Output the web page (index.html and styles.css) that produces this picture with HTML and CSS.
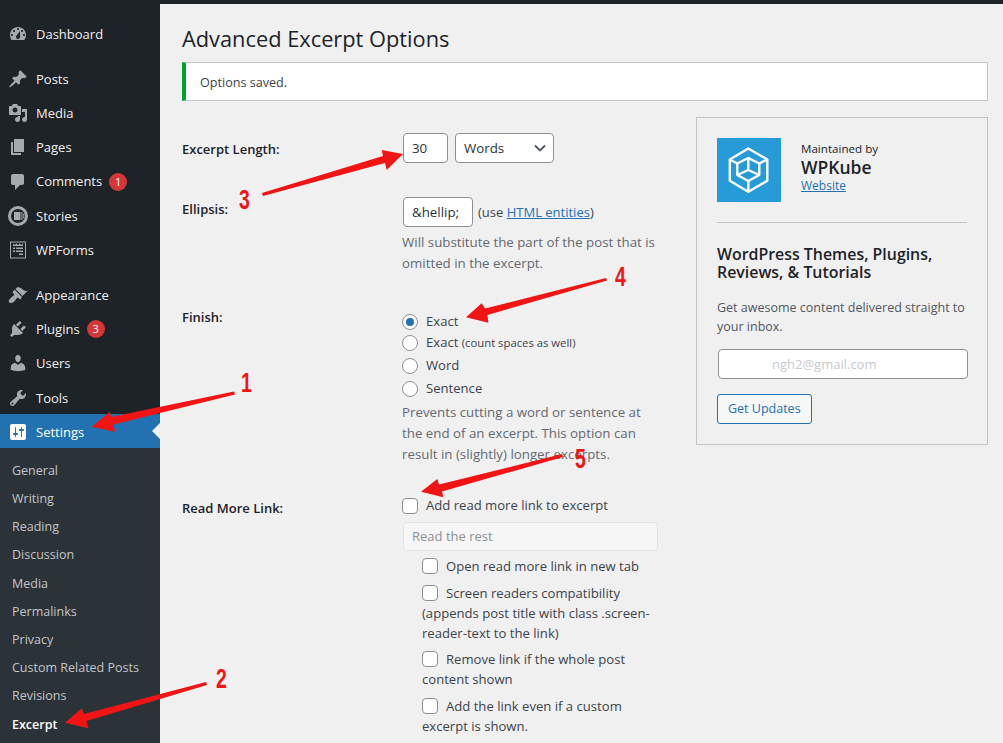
FILE: index.html
```html
<!DOCTYPE html>
<html lang="en">
<head>
<meta charset="utf-8">
<title>Advanced Excerpt Options</title>
<link rel="stylesheet" href="styles.css">
</head>
<body>
<div class="topstrip"></div>
<div class="shell">
<nav class="side">
  <ul class="menu">
    <li class="item dash"><svg class="ic" viewBox="0 0 20 20"><path fill-rule="evenodd" d="M3.76 16h12.48c1.1-1.37 1.76-3.11 1.76-5 0-4.42-3.58-8-8-8s-8 3.58-8 8c0 1.89.66 3.63 1.76 5zM10 4c.55 0 1 .45 1 1s-.45 1-1 1-1-.45-1-1 .45-1 1-1zM6 6c.55 0 1 .45 1 1s-.45 1-1 1-1-.45-1-1 .45-1 1-1zm8 0c.55 0 1 .45 1 1s-.45 1-1 1-1-.45-1-1 .45-1 1-1zm-5.37 5.55L12 7v6c0 1.1-.9 2-2 2s-2-.9-2-2c0-.57.24-1.08.63-1.45zM4 10c.55 0 1 .45 1 1s-.45 1-1 1-1-.45-1-1 .45-1 1-1zm12 0c.55 0 1 .45 1 1s-.45 1-1 1-1-.45-1-1 .45-1 1-1z"/></svg><span>Dashboard</span></li>
    <li class="item"><svg class="ic" viewBox="0 0 20 20"><path d="M10.44 3.02l1.82-1.82 6.36 6.35-1.83 1.82c-1.05-.68-2.48-.57-3.41.36l-.75.75c-.92.93-1.04 2.35-.35 3.41l-1.83 1.82-2.41-2.41-2.8 2.79c-.42.42-3.38 2.71-3.8 2.29s1.86-3.39 2.28-3.81l2.79-2.79L4.1 9.36l1.83-1.82c1.05.69 2.48.57 3.4-.36l.75-.75c.93-.92 1.05-2.35.36-3.41z"/></svg><span>Posts</span></li>
    <li class="item"><svg class="ic" viewBox="0 0 20 20"><path fill-rule="evenodd" d="M13 11V4c0-.55-.45-1-1-1h-1.67L9 1H5L3.67 3H2c-.55 0-1 .45-1 1v7c0 .55.45 1 1 1h10c.55 0 1-.45 1-1zM7 4.500c1.38 0 2.500 1.120 2.500 2.500S8.380 9.500 7 9.500 4.500 8.380 4.500 7 5.620 4.500 7 4.500zM14 6h5v10.500c0 1.380-1.120 2.500-2.500 2.500S14 17.880 14 16.500s1.120-2.500 2.500-2.500c.17 0 .34.02.5.05V9h-3V6zm-4 8.050V13h2v3.500c0 1.380-1.120 2.500-2.500 2.500S7 17.880 7 16.500 8.120 14 9.500 14c.17 0 .34.02.5.05z"/></svg><span>Media</span></li>
    <li class="item"><svg class="ic" viewBox="0 0 20 20"><path d="M6 15V2h10v13H6zm-1 1h8v2H3V5h2v11z"/></svg><span>Pages</span></li>
    <li class="item"><svg class="ic" viewBox="0 0 20 20"><path d="M5 2h9c1.100 0 2 .9 2 2v7c0 1.100-.9 2-2 2h-2l-5 5v-5H5c-1.100 0-2-.9-2-2V4c0-1.100.9-2 2-2z"/></svg><span>Comments</span><b class="badge">1</b></li>
    <li class="item"><svg class="ic" viewBox="0 0 20 20"><path fill-rule="evenodd" d="M10 0a10 10 0 1 1 0 20 10 10 0 0 1 0-20zM10 3a7 7 0 1 0 0 14 7 7 0 0 0 0-14zM6 6h6.500v8H6zM13.500 6h1v8h-1zM15.300 7.500h.9v5h-.9z"/></svg><span>Stories</span></li>
    <li class="item"><svg class="ic" viewBox="0 0 20 20"><path fill-rule="evenodd" d="M2 1.500h16v17H2zM3 2.500v15h14v-15zM5 3.500l1.700 1.500 1.600-1.500 1.700 1.500 1.700-1.500 1.600 1.500 1.700-1.500V6H5zM5 7.500h2V9H5zM8 7.500h7V9H8zM5 10.500h2V12H5zM8 10.500h7V12H8zM11 13.500h4V15h-4z"/></svg><span>WPForms</span></li>
    <li class="item sep"><svg class="ic" viewBox="0 0 20 20"><path d="M14.480 11.060L7.410 3.990l1.500-1.500c.5-.56 2.300-.47 3.510.32 1.210.8 1.430 1.280 2.910 2.100 1.180.64 2.450 1.260 4.450.85zm-.71.71L6.700 4.700 4.930 6.470c-.39.39-.39 1.020 0 1.410l1.060 1.060c.39.39.39 1.030 0 1.420-.6.6-1.430 1.110-2.210 1.690-.35.26-.7.53-1.010.84C1.430 13.730 0 16.180 1.380 17.560c1.380 1.380 3.830-.05 5.090-1.330.3-.3.58-.65.84-1 .58-.78 1.090-1.610 1.690-2.210.39-.39 1.020-.39 1.410 0l1.070 1.060c.39.39 1.020.39 1.410 0z"/></svg><span>Appearance</span></li>
    <li class="item"><svg class="ic" viewBox="0 0 20 20"><path d="M13.110 4.360L9.870 7.600 8 5.730l3.240-3.240c.35-.34 1.050-.2 1.560.32.52.51.66 1.210.31 1.550zm-8 1.770l.91-1.120 9.010 9.010-1.190.84c-.71.71-2.630 1.160-3.820 1.160H6.140L4.900 17.260c-.59.59-1.540.59-2.120 0-.59-.58-.59-1.530 0-2.120l1.240-1.240v-3.880c0-1.130.4-3.190 1.090-3.890zm7.260 3.970l3.240-3.240c.34-.35 1.040-.21 1.550.31.52.51.66 1.210.31 1.550l-3.240 3.250z"/></svg><span>Plugins</span><b class="badge">3</b></li>
    <li class="item"><svg class="ic" viewBox="0 0 20 20"><path d="M10 9.250c-2.270 0-2.730-3.440-2.730-3.440C7 4.020 7.820 2 9.970 2c2.160 0 2.980 2.020 2.710 3.810 0 0-.41 3.440-2.680 3.440zm0 2.570L12.720 10c2.390 0 4.520 2.330 4.520 4.530v2.490s-3.650 1.130-7.240 1.130c-3.650 0-7.240-1.130-7.240-1.130v-2.490c0-2.250 1.940-4.480 4.470-4.480z"/></svg><span>Users</span></li>
    <li class="item"><svg class="ic" viewBox="0 0 20 20"><path fill-rule="evenodd" d="M16.680 9.770c-1.340 1.340-3.300 1.670-4.950.99l-5.410 6.520c-.99.99-2.590.99-3.580 0s-.99-2.590 0-3.570l6.520-5.420c-.68-1.650-.35-3.610.99-4.950 1.280-1.280 3.120-1.620 4.720-1.060l-2.890 2.890 2.820 2.820 2.860-2.870c.53 1.580.18 3.390-1.080 4.670zM3.810 16.210c.4.39 1.040.39 1.430 0 .4-.4.4-1.040 0-1.430-.39-.4-1.030-.4-1.430 0-.39.39-.39 1.030 0 1.430z"/></svg><span>Tools</span></li>
    <li class="item cur"><svg class="ic" viewBox="0 0 20 20"><path fill-rule="evenodd" d="M18 16V4c0-1.100-.9-2-2-2H4c-1.100 0-2 .9-2 2v12c0 1.100.9 2 2 2h12c1.100 0 2-.9 2-2zM8 11h1c.55 0 1 .45 1 1s-.45 1-1 1H8v1.500c0 .28-.22.5-.5.5s-.5-.22-.5-.5V13H6c-.55 0-1-.45-1-1s.45-1 1-1h1V5.500c0-.28.22-.5.5-.5s.5.22.5.5V11zm5-2h-1c-.55 0-1-.45-1-1s.45-1 1-1h1V5.500c0-.28.22-.5.5-.5s.5.22.5.5V7h1c.55 0 1 .45 1 1s-.45 1-1 1h-1v5.500c0 .28-.22.5-.5.5s-.5-.22-.5-.5V9z"/></svg><span>Settings</span></li>
  </ul>
  <ul class="sub">
    <li>General</li>
    <li>Writing</li>
    <li>Reading</li>
    <li>Discussion</li>
    <li>Media</li>
    <li>Permalinks</li>
    <li>Privacy</li>
    <li>Custom Related Posts</li>
    <li>Revisions</li>
    <li class="on">Excerpt</li>
  </ul>
</nav>
<main class="main">
  <h1 class="title">Advanced Excerpt Options</h1>
  <div class="notice">Options saved.</div>
  <div class="cols">
    <div class="form">
      <div class="row r-len">
        <div class="lab">Excerpt Length:</div>
        <div class="fld">
          <div class="inline">
            <span class="inp i-len">30</span>
            <span class="inp sel">Words<svg class="chev" viewBox="0 0 12 8"><path d="M1 1.500l5 5 5-5" fill="none" stroke="#50575e" stroke-width="1.800"/></svg></span>
          </div>
        </div>
      </div>
      <div class="row r-ell">
        <div class="lab">Ellipsis:</div>
        <div class="fld">
          <div class="inline"><span class="inp i-ell">&amp;hellip;</span><span class="use">(use <a>HTML entities</a>)</span></div>
          <p class="desc d-ell">Will substitute the part of the post that is omitted in the excerpt.</p>
        </div>
      </div>
      <div class="row r-fin">
        <div class="lab">Finish:</div>
        <div class="fld">
          <div class="opt o1"><i class="radio on"></i>Exact</div>
          <div class="opt o2"><i class="radio"></i>Exact&nbsp;<small>(count spaces as well)</small></div>
          <div class="opt o3"><i class="radio"></i>Word</div>
          <div class="opt"><i class="radio"></i>Sentence</div>
          <p class="desc d-fin">Prevents cutting a word or sentence at the end of an excerpt. This option can result in (slightly) longer excerpts.</p>
        </div>
      </div>
      <div class="row r-more">
        <div class="lab">Read More Link:</div>
        <div class="fld">
          <div class="opt"><i class="check"></i>Add read more link to excerpt</div>
          <span class="inp i-more">Read the rest</span>
          <div class="subopts">
            <div class="sopt"><i class="check"></i>Open read more link in new tab</div>
            <div class="sopt"><i class="check"></i>Screen readers compatibility<br>(appends post title with class .screen-reader-text to the link)</div>
            <div class="sopt"><i class="check"></i>Remove link if the whole post content shown</div>
            <div class="sopt"><i class="check"></i>Add the link even if a custom excerpt is shown.</div>
          </div>
        </div>
      </div>
    </div>
    <aside class="card">
      <div class="brand">
        <div class="logo"><svg viewBox="0 0 64 64"><g fill="none" stroke="#fff" stroke-width="2.400" stroke-linejoin="round"><path d="M31.300 10.500L50.300 21.500V42.700L31.300 53.700 12.800 42.700V21.500z"/><path d="M31.300 20L42.300 25.500V37L31.300 43 20.300 37V25.500z"/><path d="M31.300 20V32M20.300 37L31.300 32 42.300 37M31.300 43V53.700M12.800 21.500L20.300 25.500M50.300 21.500L42.300 25.500"/></g></svg></div>
        <div class="bt"><div class="mb">Maintained by</div><div class="wk">WPKube</div><a class="web">Website</a></div>
      </div>
      <hr class="rule">
      <h2 class="ch">WordPress Themes, Plugins, Reviews, &amp; Tutorials</h2>
      <p class="cp">Get awesome content delivered straight to your inbox.</p>
      <div class="email">ngh2@gmail.com</div>
      <span class="btn">Get Updates</span>
    </aside>
  </div>
</main>
</div>
<svg class="arrows" viewBox="0 0 1003 743" aria-hidden="true">
  <g fill="#f01414">
    <path d="M234 391.500L111 417 110 411.700 91.700 426.700 115 431.700 113.500 424.500 235 394.500z"/>
    <path d="M206 682L84 714 81.700 708.300 65 722.700 88.300 728.300 86.500 721 207 685z"/>
    <path d="M262 193L383 156 381.700 150 403 154 386.700 170 385 163 263 196z"/>
    <path d="M606 278L485 308.500 481.700 303.300 466 317.300 488.300 322.700 487.500 315 607 280.500z"/>
    <path d="M562 454L439 484.500 437.300 479 421 491.700 443.300 497.300 442 491.500 563 457z"/>
  </g>
</svg>
<span class="num n1">1</span><span class="num n2">2</span><span class="num n3">3</span><span class="num n4">4</span><span class="num n5">5</span>
</body>
</html>
```
FILE: styles.css
```css
* { box-sizing: border-box; }
html, body { margin: 0; padding: 0; }
body { width: 1003px; height: 743px; overflow: hidden; background: #f0f0f1; font: 13px/1.4 "Open Sans", "Noto Sans", sans-serif; color: #3c434a; position: relative; }
ul { list-style: none; margin: 0; padding: 0; }
.topstrip { height: 4px; background: #1d2327; }
.shell { display: flex; height: 739px; }
.side { width: 160px; flex: none; background: #1d2327; padding-top: 12.7px; }
.item { height: 34.2px; display: flex; align-items: center; color: #f0f0f1; font-size: 13px; padding-left: 8px; position: relative; }
.item span { margin-left: 8px; }
.item.dash { margin-bottom: 11px; }
.item.sep { margin-top: 11px; }
.ic { width: 20px; height: 20px; fill: #a7aaad; flex: none; }
.badge { width: 18px; height: 18px; border-radius: 50%; background: #d63638; color: #fff; font-size: 11px; font-weight: 400; text-align: center; line-height: 18px; margin-left: 7px; }
.item.cur { background: #2271b1; color: #fff; margin-top: -.5px; height: 34px; padding-top: 1px; }
.item.cur .ic { fill: #fff; }
.item.cur::after { content: ""; position: absolute; right: 0; top: 9px; border: 8px solid transparent; border-right-color: #f0f0f1; border-left: 0; }
.sub { background: #2c3338; padding: 8.6px 0 0; height: 295px; }
.sub li { height: 28.2px; line-height: 28px; padding-left: 12px; color: #c3c4c7; font-size: 12.5px; }
.sub li.on { color: #fff; font-weight: 600; }
.main { flex: 1; padding-left: 22px; padding-right: 15px; min-width: 0; }
.title { margin: 0; font-size: 21.8px; font-weight: 400; line-height: 30px; color: #1d2327; padding-top: 20px; height: 58px; }
.notice { height: 39px; background: #fff; border: 1px solid #c3c4c7; border-left: 4px solid #00a32a; padding-left: 14px; line-height: 40px; color: #3c434a; font-size: 12.6px; }
.cols { display: flex; justify-content: space-between; align-items: flex-start; padding-top: 17px; }
.form { width: 490px; }
.row { display: flex; }
.lab { width: 220px; flex: none; font-weight: 600; color: #1d2327; font-size: 13px; }
.fld { flex: 1; min-width: 0; }
.inline { display: flex; align-items: center; }
.inp { display: inline-flex; align-items: center; height: 30px; background: #fff; border: 1px solid #8c8f94; border-radius: 4px; padding: 0 8px; font-size: 13.3px; color: #2c3338; }
.r-len { height: 79px; padding-top: 15px; }
.r-len .lab { padding-top: 7px; }
.i-len { width: 45px; margin: 0 7px 0 1px; }
.sel { width: 99px; position: relative; }
.chev { width: 12px; height: 8px; position: absolute; right: 7px; top: 10px; }
.r-ell { height: 111px; }
.r-ell .lab { padding-top: 3px; }
.i-ell { width: 70px; margin-left: 1px; }
.use { margin-left: 5px; font-size: 13px; }
a { color: #2271b1; text-decoration: underline; }
.desc { margin: 0; width: 257px; font-size: 13.3px; line-height: 21px; color: #646970; }
.d-ell { margin-top: 5px; }
.r-fin { height: 186px; }
.r-fin .fld { padding-top: 3px; }
.opt { display: flex; align-items: center; height: 23px; font-size: 13.1px; color: #3c434a; }
.o1, .o2 { height: 21px; }
.o3 { margin-top: 1px; }
.opt small { font-size: 11.3px; }
.radio { width: 16px; height: 16px; border-radius: 50%; border: 1px solid #8c8f94; background: #fff; margin-right: 8px; flex: none; position: relative; }
.radio.on::after { content: ""; position: absolute; left: 3px; top: 3px; width: 8px; height: 8px; border-radius: 50%; background: #2271b1; }
.check { display: inline-block; width: 16px; height: 16px; border-radius: 4px; border: 1px solid #8c8f94; background: #fff; margin-right: 8px; flex: none; vertical-align: -3px; }
.d-fin { margin-top: 2px; }
.r-more .lab { padding-top: 5px; }
.i-more { width: 255px; height: 29px; margin: 5px 0 0 1px; background: #f6f6f7; border-color: #e2e3e5; color: #8c8f94; font-size: 13px; }
.subopts { padding-left: 20px; margin-top: 5px; width: 250px; font-size: 13.1px; }
.sopt { line-height: 20px; margin-bottom: 6.6px; }
.card { width: 292px; height: 328px; margin-top: -1px; border: 1px solid #c3c4c7; padding: 20px; }
.brand { display: flex; align-items: center; gap: 20px; }
.logo { width: 64px; height: 64px; background: #269bd8; flex: none; }
.logo svg { display: block; width: 64px; height: 64px; }
.bt { padding-bottom: 4px; }
.mb { font-size: 11.6px; line-height: 14px; color: #1d2327; }
.wk { font-size: 17.5px; font-weight: 600; line-height: 22px; color: #1d2327; }
.web { font-size: 12px; line-height: 16px; display: block; }
.rule { border: 0; border-top: 1px solid #c3c4c7; margin: 20px 0 0; }
.ch { margin: 22px 0 0; font-size: 15.9px; font-weight: 600; line-height: 18px; color: #1d2327; }
.cp { margin: 17px 0 0; font-size: 12.5px; line-height: 19px; color: #50575e; }
.email { width: 250px; height: 30px; margin: 13px 0 0 1px; background: #fff; border: 1px solid #8c8f94; border-radius: 4px; padding-left: 53px; line-height: 28px; font-size: 13px; color: #c8cacc; }
.btn { display: inline-block; margin-top: 15px; height: 30px; line-height: 28px; padding: 0 10px; border: 1px solid #2271b1; border-radius: 3px; color: #2271b1; background: #f6f7f7; font-size: 12.5px; }
.arrows { position: absolute; left: 0; top: 0; width: 1003px; height: 743px; pointer-events: none; }
.num { position: absolute; font: 700 27px/1 "Liberation Sans", sans-serif; color: #f01414; transform: scaleX(.72); transform-origin: left top; }
.n1 { left: 241px; top: 370px; }
.n2 { left: 216px; top: 666px; }
.n3 { left: 239px; top: 187px; }
.n4 { left: 615px; top: 264px; }
.n5 { left: 575px; top: 446px; }
```
